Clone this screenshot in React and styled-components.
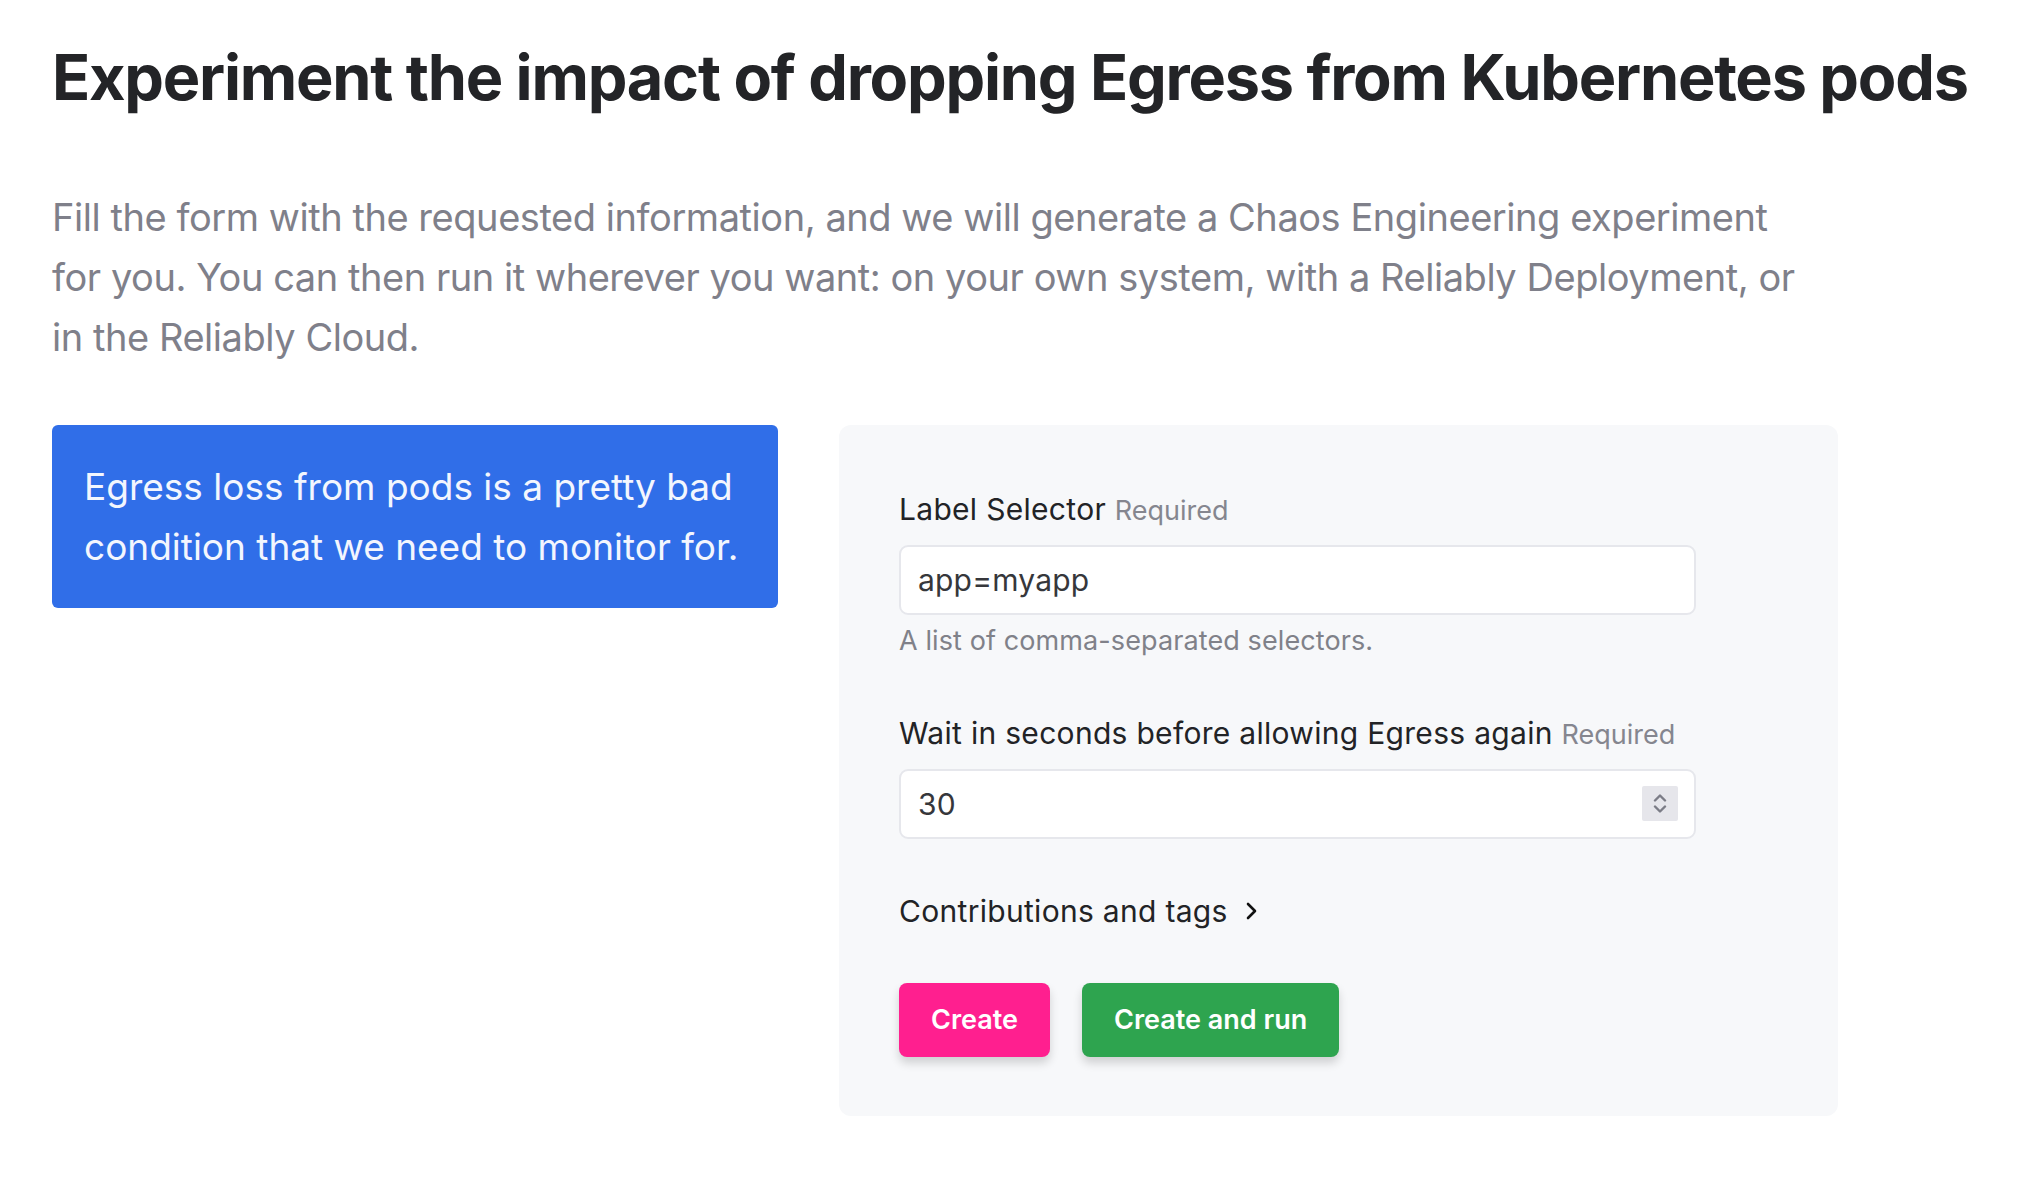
import styled, { createGlobalStyle } from 'styled-components';

const GlobalStyle = createGlobalStyle`
   * { box-sizing: border-box; }
   body {
      margin: 0;
      background: #ffffff;
      font-family: Inter, "Noto Sans", sans-serif;
      color: #222326;
   }
`;

const Page = styled.main`
   padding: 40px 52px 60px;
`;

const Title = styled.h1`
   margin: 0;
   font-size: 63px;
   line-height: 1.2;
   font-weight: 700;
   letter-spacing: -1.25px;
   color: #232427;
   white-space: nowrap;
`;

const Lead = styled.p`
   margin: 71px 0 0;
   max-width: 1752px;
   font-size: 38px;
   line-height: 60px;
   letter-spacing: -0.45px;
   color: #7f808a;
`;

const Columns = styled.div`
   display: flex;
   align-items: flex-start;
   gap: 61px;
   margin-top: 58px;
`;

const Callout = styled.div`
   width: 726px;
   padding: 32px 32px 31px;
   background: #306ee8;
   border-radius: 6px;
   color: #f3f6fe;
   font-size: 37px;
   line-height: 60px;
`;

const Panel = styled.form`
   width: 999px;
   padding: 64px 60px 59px;
   background: #f7f8fa;
   border-radius: 12px;
`;

const Field = styled.div`
   width: 797px;
   margin-bottom: ${p => p.$last ? '52px' : '54px'};
`;

const Label = styled.label`
   display: block;
   font-size: 30px;
   line-height: 40px;
   letter-spacing: 0.3px;
   color: #222326;
   margin-bottom: 14px;
`;

const Req = styled.span`
   font-size: 27px;
   letter-spacing: 0;
   color: #85868f;
`;

const InputBox = styled.div`
   display: flex;
   align-items: center;
   height: 70px;
   padding: 0 16px 0 17px;
   background: #ffffff;
   border: 2px solid #e6e7ec;
   border-radius: 9px;
   font-size: 30px;
   letter-spacing: 0.2px;
   color: #36373b;
`;

const Value = styled.span`
   flex: 1;
`;

const Spinner = styled.span`
   display: flex;
   flex-direction: column;
   align-items: center;
   justify-content: center;
   gap: 3px;
   width: 36px;
   height: 35px;
   background: #e6e6eb;
   border-radius: 2px;
`;

const Help = styled.div`
   margin-top: 8px;
   font-size: 27px;
   line-height: 36px;
   letter-spacing: 0.1px;
   color: #808189;
`;

const Toggle = styled.div`
   display: flex;
   align-items: center;
   gap: 16px;
   font-size: 30px;
   line-height: 40px;
   letter-spacing: 0.3px;
   color: #222326;
`;

const Actions = styled.div`
   display: flex;
   gap: 32px;
   margin-top: 52px;
`;

const Button = styled.button`
   height: 74px;
   padding: 0 32px;
   border: none;
   border-radius: 8px;
   background: ${p => p.$tone === 'green' ? '#2ea44f' : '#ff1f8f'};
   color: #ffffff;
   font-family: Inter, "Noto Sans", sans-serif;
   font-size: 27px;
   font-weight: 600;
   box-shadow: 0 6px 10px rgba(0, 0, 0, 0.16);
`;

function Chevron({ up }) {
   return (
      <svg width="14" height="9" viewBox="0 0 14 9" fill="none" stroke="#7b7c86" strokeWidth="2.4" strokeLinecap="round" strokeLinejoin="round">
         <path d={up ? 'M2 7.5 7 2.5 12 7.5' : 'M2 1.5 7 6.5 12 1.5'} />
      </svg>
   );
}

export default function App() {
   return (
      <>
         <GlobalStyle />
         <Page>
            <Title>Experiment the impact of dropping Egress from Kubernetes pods</Title>
            <Lead>
               Fill the form with the requested information, and we will generate a Chaos Engineering experiment
               for you. You can then run it wherever you want: on your own system, with a Reliably Deployment, or
               in the Reliably Cloud.
            </Lead>
            <Columns>
               <Callout>Egress loss from pods is a pretty bad condition that we need to monitor for.</Callout>
               <Panel>
                  <Field>
                     <Label>Label Selector <Req>Required</Req></Label>
                     <InputBox><Value>app=myapp</Value></InputBox>
                     <Help>A list of comma-separated selectors.</Help>
                  </Field>
                  <Field $last>
                     <Label>Wait in seconds before allowing Egress again <Req>Required</Req></Label>
                     <InputBox>
                        <Value>30</Value>
                        <Spinner><Chevron up /><Chevron /></Spinner>
                     </InputBox>
                  </Field>
                  <Toggle>
                     Contributions and tags
                     <svg width="14" height="20" viewBox="0 0 14 20" fill="none" stroke="#111" strokeWidth="2.6" strokeLinecap="round" strokeLinejoin="round">
                        <path d="M4 3l7 7-7 7" />
                     </svg>
                  </Toggle>
                  <Actions>
                     <Button type="button">Create</Button>
                     <Button type="button" $tone="green">Create and run</Button>
                  </Actions>
               </Panel>
            </Columns>
         </Page>
      </>
   );
}
